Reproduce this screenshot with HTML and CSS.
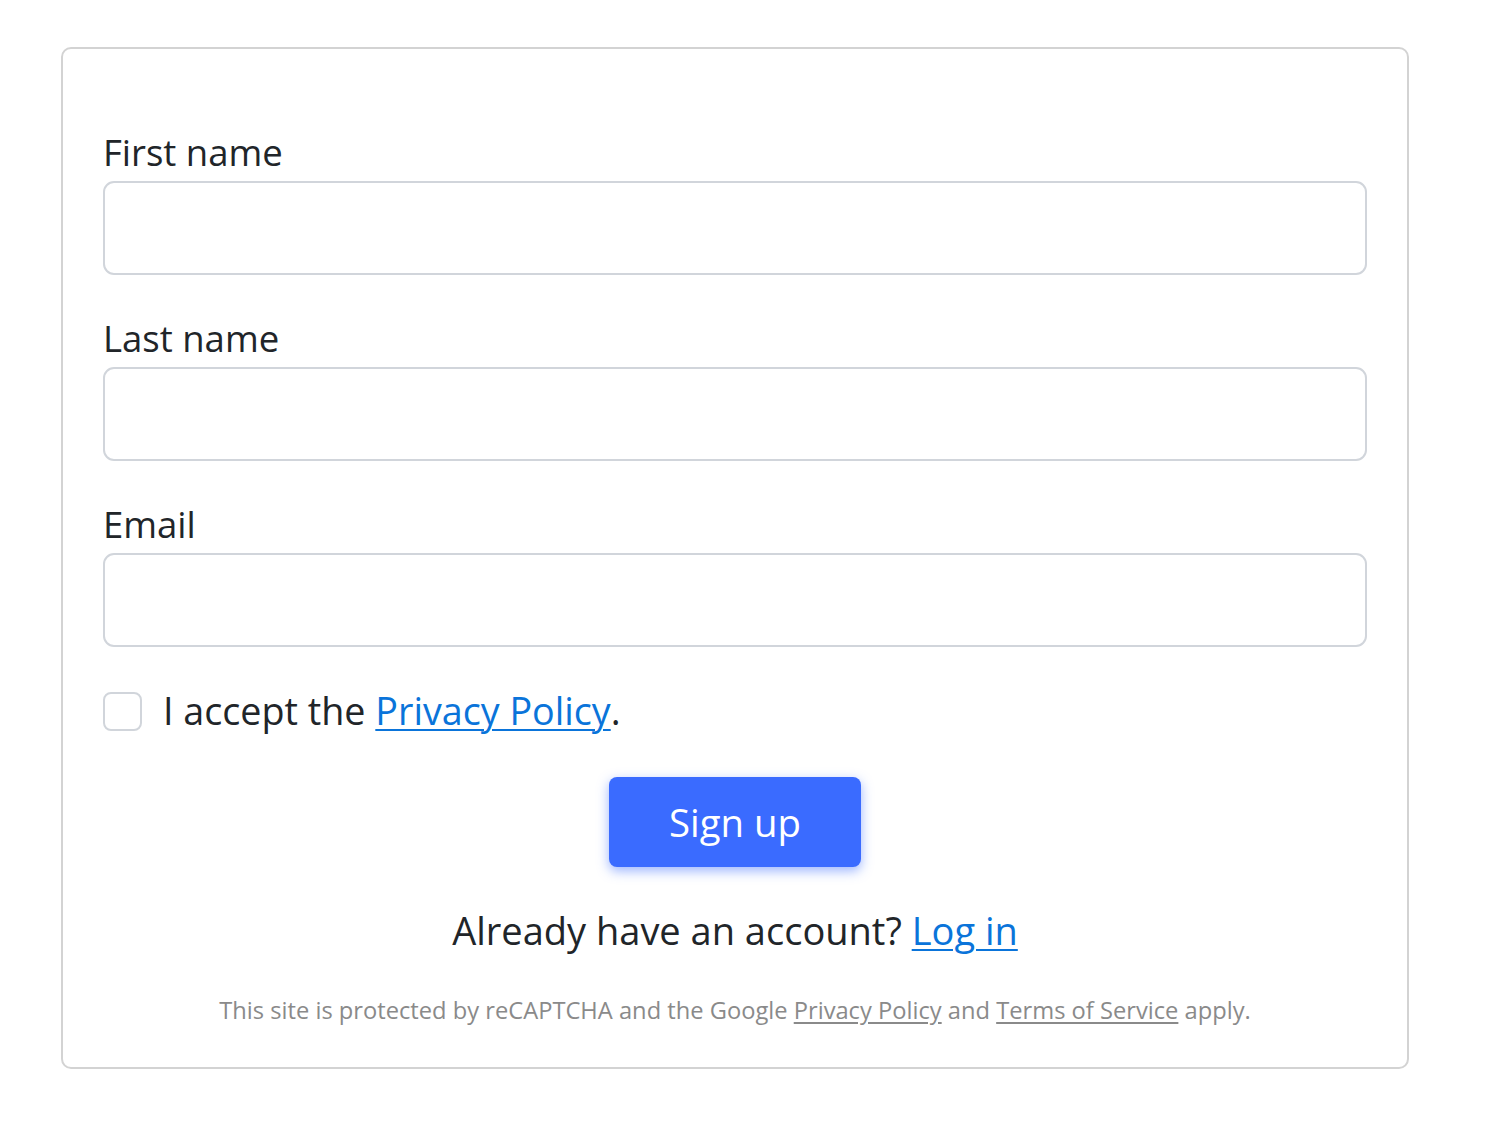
FILE: index.html
```html
<!DOCTYPE html>
<html lang="en">
<head>
<meta charset="utf-8">
<title>Sign up</title>
<link rel="stylesheet" href="styles.css">
</head>
<body>
<main class="page">
  <form class="card" onsubmit="return false">
    <div class="field">
      <label class="field-label" for="first">First name</label>
      <input class="field-input" id="first" type="text">
    </div>
    <div class="field">
      <label class="field-label" for="last">Last name</label>
      <input class="field-input" id="last" type="text">
    </div>
    <div class="field">
      <label class="field-label" for="email">Email</label>
      <input class="field-input" id="email" type="email">
    </div>
    <div class="consent">
      <input class="consent-box" id="accept" type="checkbox">
      <label class="consent-text" for="accept">I accept the <a class="link" href="#">Privacy Policy</a>.</label>
    </div>
    <div class="actions">
      <button class="btn-primary" type="submit">Sign up</button>
    </div>
    <p class="login">Already have an account? <a class="link" href="#">Log in</a></p>
    <p class="legal">This site is protected by reCAPTCHA and the Google <a class="legal-link" href="#">Privacy Policy</a> and <a class="legal-link" href="#">Terms of Service</a> apply.</p>
  </form>
</main>
</body>
</html>
```
FILE: styles.css
```css
* { box-sizing: border-box; }

html, body {
  margin: 0;
  padding: 0;
  background: #ffffff;
}

body {
  font-family: "Open Sans", "Noto Sans", sans-serif;
  color: #212529;
}

.page {
  padding: 47px 0 0 61px;
}

.card {
  width: 1348px;
  border: 2px solid #d3d3d3;
  border-radius: 10px;
  padding: 81px 40px 41px;
  display: flex;
  flex-direction: column;
}

.field {
  display: flex;
  flex-direction: column;
  margin-bottom: 41px;
}

.field-label {
  font-size: 36.5px;
  line-height: 44px;
  margin-bottom: 7px;
}

.field-input {
  height: 94px;
  width: 100%;
  border: 2px solid #d1d5db;
  border-radius: 11px;
  background: #fff;
  font: inherit;
  font-size: 36px;
  padding: 0 20px;
  outline: none;
}

.consent {
  display: flex;
  align-items: center;
  gap: 21px;
  margin-top: -1px;
}

.consent-box {
  appearance: none;
  -webkit-appearance: none;
  width: 39px;
  height: 39px;
  margin: 0;
  border: 2px solid #d1d5db;
  border-radius: 8px;
  background: #fff;
  flex: none;
}

.consent-text {
  font-size: 37.7px;
  line-height: 48px;
}

.link {
  color: #0a74da;
  text-decoration: underline;
  text-decoration-thickness: 2px;
  text-underline-offset: 4px;
}

.actions {
  display: flex;
  justify-content: center;
  margin-top: 42px;
}

.btn-primary {
  width: 252px;
  height: 90px;
  display: flex;
  align-items: center;
  justify-content: center;
  border: none;
  border-radius: 8px;
  background: #3a6bff;
  color: #ffffff;
  font-family: inherit;
  font-size: 38.3px;
  box-shadow: 0 4px 12px rgba(58, 107, 255, 0.5);
  cursor: pointer;
}

.login {
  margin: 39px 0 0;
  text-align: center;
  font-size: 38px;
  line-height: 48px;
}

.legal {
  margin: 40px 0 0;
  text-align: center;
  font-size: 23.7px;
  line-height: 32px;
  color: #8a8a8a;
}

.legal-link {
  color: #8a8a8a;
  text-decoration: underline;
  text-underline-offset: 3px;
}
```
